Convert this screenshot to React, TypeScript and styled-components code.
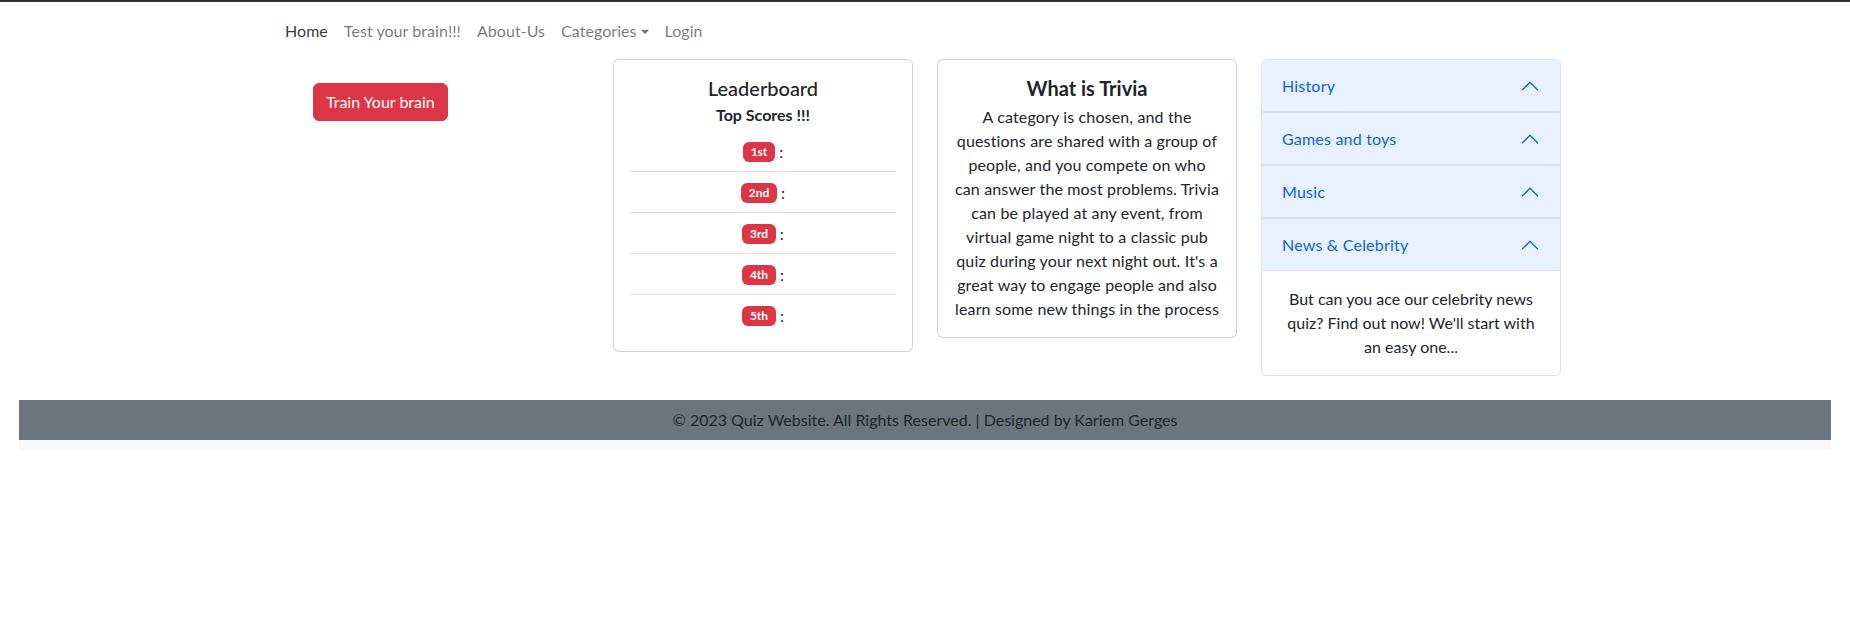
import React from "react";
import styled, { createGlobalStyle } from "styled-components";

const FONT = `Lato, "Liberation Sans", sans-serif`;

const GlobalStyle = createGlobalStyle`
  html, body { margin: 0; padding: 0; background: #fff; }
  body {
    font-family: ${FONT};
    font-size: 16px;
    line-height: 24px;
    color: #212529;
  }
  * { box-sizing: border-box; }
`;

const Page = styled.div`
  border-top: 2px solid #2e2e2e;
  min-height: 634px;
`;

const NavBar = styled.nav`
  width: 1296px;
  margin: 0 auto;
  padding: 9px 0 8px;
  display: flex;
  align-items: center;
`;

const NavLink = styled.a<{ $active?: boolean; $dropdown?: boolean }>`
  display: block;
  padding: 8px;
  font-size: 16px;
  line-height: 24px;
  letter-spacing: 0.05px;
  text-decoration: none;
  cursor: pointer;
  color: ${(p) => (p.$active ? "rgba(0,0,0,0.8)" : "rgba(0,0,0,0.55)")};
  ${(p) =>
    p.$dropdown &&
    `
    &::after {
      content: "";
      display: inline-block;
      margin-left: 4px;
      vertical-align: 3px;
      border-top: 4.8px solid;
      border-right: 4.8px solid transparent;
      border-left: 4.8px solid transparent;
      border-bottom: 0;
    }
  `}
`;

const Row = styled.main`
  width: 1296px;
  margin: 0 auto;
  display: flex;
  align-items: flex-start;
  gap: 24px;
  padding-bottom: 24px;
`;

const LeftCol = styled.div`
  width: 312px;
  padding: 24px 0 0 36px;
`;

const DangerButton = styled.button`
  font-family: ${FONT};
  font-size: 16px;
  line-height: 24px;
  padding: 6px 12px;
  border: 1px solid #dc3545;
  border-radius: 6px;
  background: #dc3545;
  color: #fff;
  cursor: pointer;
`;

const Card = styled.section`
  width: 300px;
  border: 1px solid rgba(0, 0, 0, 0.175);
  border-radius: 6px;
  padding: 16px;
  text-align: center;
  background: #fff;
`;

const CardTitle = styled.h5<{ $bold?: boolean; $mb: number }>`
  margin: 0 0 ${(p) => p.$mb}px;
  font-size: 20px;
  line-height: 24px;
  font-weight: ${(p) => (p.$bold ? 700 : 500)};
  color: #212529;
`;

const CardSubtitle = styled.h6`
  margin: 0 0 7px;
  font-size: 16px;
  line-height: 19.2px;
  font-weight: 700;
`;

const ScoreList = styled.ul`
  list-style: none;
  margin: 0;
  padding: 0;
`;

const ScoreItem = styled.li`
  height: 41px;
  display: flex;
  align-items: center;
  justify-content: center;
  gap: 4px;
  padding: 2px 16px 0;
  border-bottom: 1px solid #dee2e6;
  &:last-child { border-bottom: 0; height: 40px; }
`;

const Badge = styled.span`
  display: inline-block;
  padding: 4px 7.8px;
  font-size: 12px;
  font-weight: 700;
  line-height: 12px;
  color: #fff;
  background: #dc3545;
  border-radius: 6px;
`;

const Colon = styled.span`
  font-size: 16px;
  line-height: 24px;
`;

const CardText = styled.p`
  margin: 0;
  font-size: 16px;
  line-height: 24px;
  letter-spacing: 0.15px;
`;

const Accordion = styled.div`
  width: 300px;
  border: 1px solid #dee2e6;
  border-radius: 6px;
  overflow: hidden;
`;

const AccItem = styled.div`
  & + & { border-top: 1px solid #dee2e6; }
`;

const AccHeader = styled.button`
  width: 100%;
  display: flex;
  align-items: center;
  justify-content: space-between;
  padding: 14px 20px;
  border: 0;
  margin: 0;
  font-family: ${FONT};
  font-size: 16px;
  line-height: 24px;
  letter-spacing: 0.2px;
  color: #0c63e4;
  background: #e7f1ff;
  box-shadow: inset 0 -1px 0 #dee2e6;
  text-align: left;
  cursor: pointer;
`;

const AccBody = styled.div`
  padding: 16px 20px;
  text-align: center;
  font-size: 16px;
  line-height: 24px;
`;

const Chevron = styled.svg`
  width: 20px;
  height: 20px;
  flex-shrink: 0;
`;

const FooterWrap = styled.footer`
  margin: 0 19px;
`;

const FooterBar = styled.div`
  background: #6c757d;
  color: #212529;
  text-align: center;
  padding: 8px;
  font-size: 16px;
  line-height: 24px;
`;

const FooterStrip = styled.div`
  height: 10px;
  background: #f8f9fa;
`;

const ChevronUp = () => (
  <Chevron viewBox="0 0 16 16" fill="#0c63e4">
    <g transform="rotate(180 8 8)">
      <path
        fillRule="evenodd"
        d="M1.646 4.646a.5.5 0 0 1 .708 0L8 10.293l5.646-5.647a.5.5 0 0 1 .708.708l-6 6a.5.5 0 0 1-.708 0l-6-6a.5.5 0 0 1 0-.708z"
      />
    </g>
  </Chevron>
);

const places = ["1st", "2nd", "3rd", "4th", "5th"];
const categories = ["History", "Games and toys", "Music", "News & Celebrity"];

const triviaLines = [
  "A category is chosen, and the",
  "questions are shared with a group of",
  "people, and you compete on who",
  "can answer the most problems. Trivia",
  "can be played at any event, from",
  "virtual game night to a classic pub",
  "quiz during your next night out. It's a",
  "great way to engage people and also",
  "learn some new things in the process",
];

export default function App() {
  return (
    <>
      <GlobalStyle />
      <Page>
        <NavBar>
          <NavLink $active>Home</NavLink>
          <NavLink>Test your brain!!!</NavLink>
          <NavLink>About-Us</NavLink>
          <NavLink $dropdown>Categories</NavLink>
          <NavLink>Login</NavLink>
        </NavBar>
        <Row>
          <LeftCol>
            <DangerButton>Train Your brain</DangerButton>
          </LeftCol>
          <Card>
            <CardTitle $mb={5}>Leaderboard</CardTitle>
            <CardSubtitle>Top Scores !!!</CardSubtitle>
            <ScoreList>
              {places.map((p) => (
                <ScoreItem key={p}>
                  <Badge>{p}</Badge>
                  <Colon>:</Colon>
                </ScoreItem>
              ))}
            </ScoreList>
          </Card>
          <Card>
            <CardTitle $bold $mb={5}>What is Trivia</CardTitle>
            <CardText>
              {triviaLines.map((line, i) => (
                <React.Fragment key={i}>
                  {line}
                  {i < triviaLines.length - 1 && <br />}
                </React.Fragment>
              ))}
            </CardText>
          </Card>
          <Accordion>
            {categories.map((c, i) => (
              <AccItem key={c}>
                <AccHeader>
                  <span>{c}</span>
                  <ChevronUp />
                </AccHeader>
                {i === categories.length - 1 && (
                  <AccBody>
                    But can you ace our celebrity news quiz? Find out now! We'll start
                    with an easy one...
                  </AccBody>
                )}
              </AccItem>
            ))}
          </Accordion>
        </Row>
        <FooterWrap>
          <FooterBar>
            © 2023 Quiz Website. All Rights Reserved. | Designed by Kariem Gerges
          </FooterBar>
          <FooterStrip />
        </FooterWrap>
      </Page>
    </>
  );
}
